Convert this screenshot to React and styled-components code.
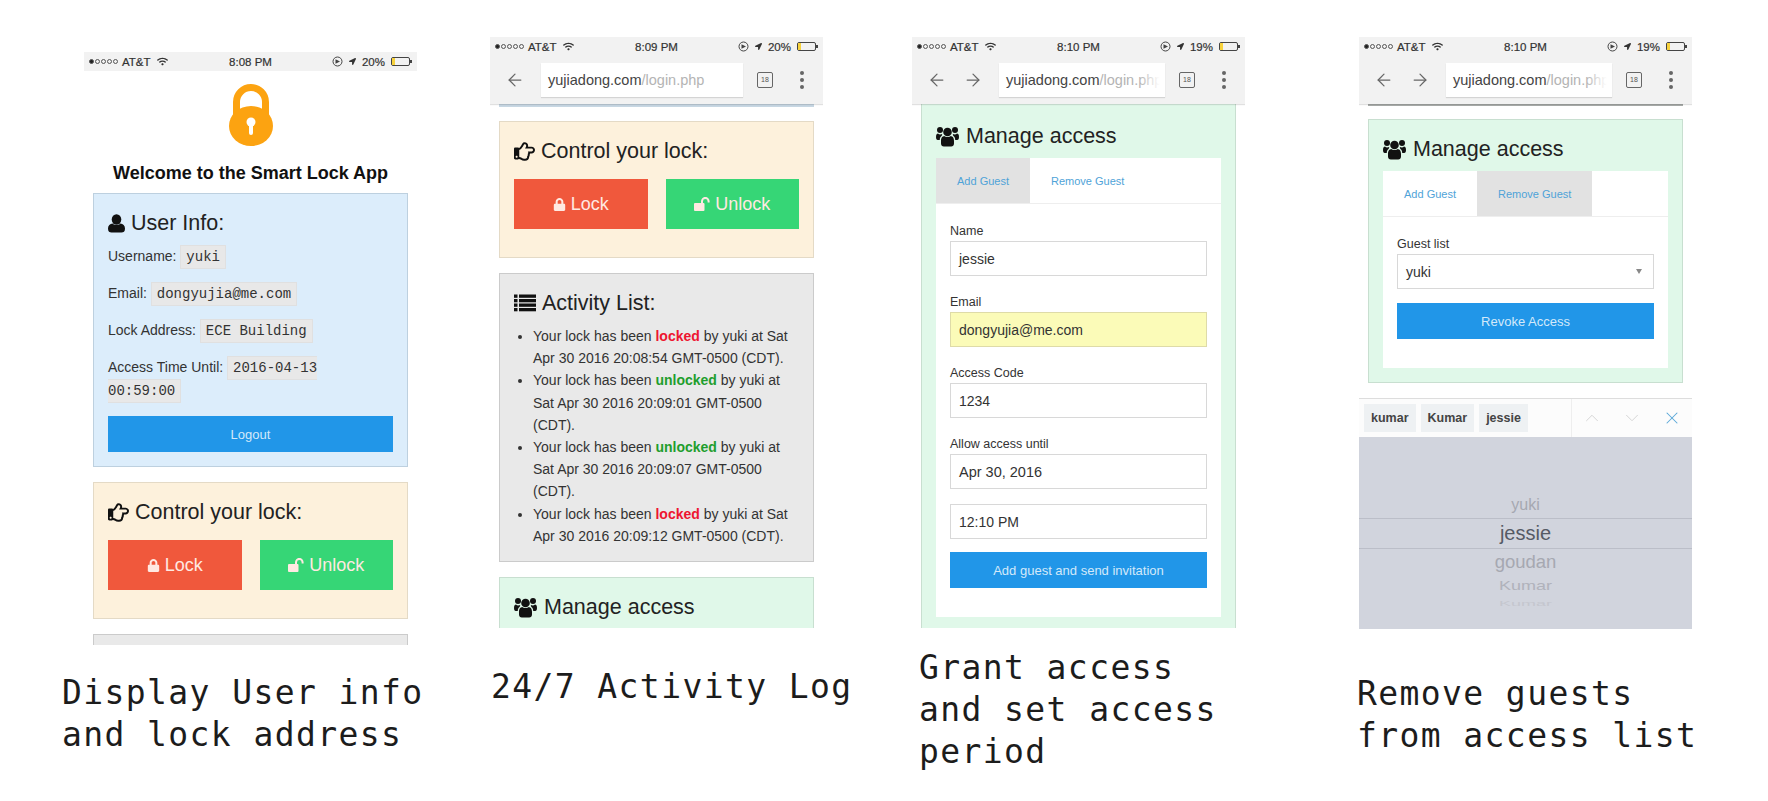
import styled, { createGlobalStyle } from "styled-components";
import { FaRegHandPointRight, FaLock, FaWifi, FaLocationArrow } from "react-icons/fa";
import { ArrowLeft, ArrowRight, ChevronUp, ChevronDown, X } from "lucide-react";

const tones = {
  blue: { bg: "#dcedfb", line: "#bdd0df" },
  yellow: { bg: "#fdf1dc", line: "#e4dac6" },
  gray: { bg: "#e9e9e9", line: "#cbcbcb" },
  green: { bg: "#e0f8e9", line: "#c8dfd0" },
};

const GlobalStyle = createGlobalStyle`
  html, body {
    margin: 0;
    padding: 0;
    background: #fff;
  }

  * {
    box-sizing: border-box;
  }
`;

const Page = styled.div`
  display: flex;
  align-items: flex-start;
  width: 1768px;
  height: 801px;
  overflow: hidden;
  padding-left: 62px;
  font-family: "Liberation Sans", Arial, sans-serif;
  color: #222;
`;

const Column = styled.section`
  flex: none;
  width: ${(p) => p.$width}px;
  margin-left: ${(p) => p.$left || 0}px;
  margin-top: ${(p) => p.$top}px;
`;

const Phone = styled.div`
  width: 333px;
  height: ${(p) => p.$height}px;
  margin-left: ${(p) => p.$inset || 0}px;
  overflow: hidden;
`;

const Caption = styled.p`
  margin: ${(p) => p.$top}px 0 0 ${(p) => p.$inset || 0}px;
  font-family: "DejaVu Sans Mono", monospace;
  font-size: 33px;
  letter-spacing: 1.4px;
  line-height: 42px;
  color: #1c1c1c;
  white-space: nowrap;
`;

/* ---- status bar and browser chrome ---- */

const Chrome = styled.header`
  background: #f2f2f2;
  position: relative;
  z-index: 1;
  box-shadow: 0 1px 1px rgba(0, 0, 0, 0.12);
`;

const StatusBar = styled.div`
  display: grid;
  grid-template-columns: 1fr auto 1fr;
  align-items: center;
  height: 19px;
  padding: 0 5px;
  background: #f2f2f2;
  font-size: 11.5px;
  color: #333;
  -webkit-text-stroke: 0.2px #333;
`;

const StatusLeft = styled.div`
  display: flex;
  align-items: center;
  gap: 6px;
`;

const Carrier = styled.span`
  display: flex;
  align-items: center;
  gap: 4px;
`;

const Dots = styled.span`
  display: flex;
  gap: 1px;
`;

const Dot = styled.i`
  width: 5px;
  height: 5px;
  border-radius: 50%;
  border: 0.5px solid #555;
  background: ${(p) => (p.$on ? "#222" : "transparent")};
`;

const StatusRight = styled.div`
  display: flex;
  align-items: center;
  justify-content: flex-end;
  gap: 6px;
`;

const Battery = styled.span`
  position: relative;
  display: block;
  width: 19px;
  height: 9px;
  margin-right: 2px;
  border: 1px solid #444;
  border-radius: 2px;

  &::before {
    content: "";
    display: block;
    width: ${(p) => p.$level}%;
    height: 100%;
    background: #f7d23c;
  }

  &::after {
    content: "";
    position: absolute;
    right: -3px;
    top: 2px;
    width: 2px;
    height: 3px;
    background: #444;
  }
`;

const NavBar = styled.nav`
  display: flex;
  align-items: center;
  height: 48px;
  padding: 0 6px 0 7px;
`;

const NavSlot = styled.span`
  flex: none;
  display: flex;
  justify-content: center;
  width: 36px;
  color: #666;
`;

const UrlBox = styled.div`
  position: relative;
  flex: 1;
  min-width: 0;
  height: 34px;
  margin-left: 8px;
  padding: 0 7px;
  background: #fff;
  box-shadow: 0 1px 1px rgba(0, 0, 0, 0.12);
  font-size: 14.5px;
  line-height: 34px;
  white-space: nowrap;
  overflow: hidden;
  color: #444;

  ${(p) =>
    p.$fade &&
    `&::after {
      content: "";
      position: absolute;
      top: 0;
      right: 0;
      width: 26px;
      height: 100%;
      background: linear-gradient(to right, rgba(255, 255, 255, 0), #fff 80%);
    }`}
`;

const UrlPath = styled.span`
  color: #b4b4b4;
`;

const TabSlot = styled.span`
  flex: none;
  display: flex;
  justify-content: center;
  width: 44px;
`;

const TabCount = styled.span`
  width: 16px;
  height: 16px;
  border: 1.5px solid #666;
  border-radius: 2px;
  font-size: 7px;
  line-height: 13px;
  text-align: center;
  color: #555;
`;

const MenuDots = styled.span`
  flex: none;
  display: flex;
  flex-direction: column;
  align-items: center;
  gap: 3px;
  width: 30px;
`;

const MenuDot = styled.i`
  width: 4px;
  height: 4px;
  border-radius: 50%;
  background: #666;
`;

const Sliver = styled.div`
  height: ${(p) => p.$height}px;
  margin: 0 9px ${(p) => p.$gap}px;
  background: ${(p) => p.$color};
`;

/* ---- app content ---- */

const Logo = styled.svg`
  display: block;
  width: 44px;
  height: 62px;
  margin: 13px auto 0;
`;

const AppTitle = styled.h1`
  margin: 16px 0 9px;
  font-size: 18px;
  line-height: 22px;
  font-weight: 700;
  text-align: center;
  color: #111;
`;

const Panel = styled.div`
  margin: 0 9px 15px;
  padding: ${(p) => (p.$flush ? 20 : 17)}px 14px 14px;
  background: ${(p) => tones[p.$tone].bg};
  border: 1px solid ${(p) => tones[p.$tone].line};
  border-top-width: ${(p) => (p.$flush ? 0 : 1)}px;
`;

const PanelTitle = styled.h2`
  display: flex;
  align-items: center;
  gap: ${(p) => p.$gap || 6}px;
  margin: 0 0 10px;
  font-size: 21.5px;
  line-height: 24px;
  font-weight: 400;
  color: #222;

  svg {
    flex: none;
    color: #111;
  }
`;

const InfoRow = styled.p`
  margin: 0 0 14px;
  font-size: 14px;
  line-height: 23px;
  color: #333;
`;

const Code = styled.code`
  padding: 3px 5px;
  font-family: "Liberation Mono", monospace;
  font-size: 14px;
  line-height: 1;
  color: #333;
  background: #e8e8e8;
  border: 1px solid #e0e0e0;
`;

const WideButton = styled.button`
  display: block;
  width: 100%;
  height: 36px;
  margin-top: ${(p) => p.$top || 0}px;
  border: 0;
  background: #2196e8;
  color: #d3e9fa;
  font-family: inherit;
  font-size: 13px;
`;

const Actions = styled.div`
  display: grid;
  grid-template-columns: 1fr 1fr;
  gap: 18px;
  margin: 16px 0 14px;
`;

const ActionButton = styled.button`
  display: flex;
  align-items: center;
  justify-content: center;
  gap: 5px;
  height: 50px;
  border: 0;
  background: ${(p) => (p.$unlock ? "#36d676" : "#f0583c")};
  color: #ffe9e2;
  font-family: inherit;
  font-size: 18px;
`;

const ActivityList = styled.ul`
  margin: 0;
  padding-left: 19px;
  font-size: 14px;
  line-height: 22.2px;
  color: #333;
`;

const Status = styled.b`
  color: ${(p) => (p.$locked ? "#ee1530" : "#1f9e2d")};
`;

const Card = styled.div`
  margin-top: ${(p) => p.$top || 0}px;
  background: #fff;
`;

const Tabs = styled.div`
  display: flex;
  height: 46px;
  border-bottom: 1px solid #eee;
`;

const Tab = styled.a`
  display: flex;
  align-items: center;
  padding: 0 21px;
  background: ${(p) => (p.$active ? "#e2e2e2" : "transparent")};
  font-size: 11px;
  color: #4fa3d8;
`;

const TabPane = styled.div`
  padding: 16px 14px 29px;
`;

const Group = styled.div`
  margin-bottom: ${(p) => p.$gap ?? 15}px;
`;

const Label = styled.label`
  display: block;
  padding-top: 2px;
  font-size: 12.5px;
  line-height: 19px;
  color: #333;
`;

const Field = styled.div`
  display: flex;
  align-items: center;
  justify-content: space-between;
  height: 35px;
  padding: 0 8px;
  background: ${(p) => (p.$filled ? "#fbfbb8" : "#fff")};
  border: 1px solid ${(p) => (p.$filled ? "#dedba8" : "#d8d8d8")};
  font-size: ${(p) => p.$size || 14}px;
  color: #333;
`;

const Caret = styled.i`
  width: 0;
  height: 0;
  margin-right: 3px;
  border: 3px solid transparent;
  border-top: 5px solid #888;
  border-bottom: 0;
`;

/* ---- ios keyboard accessory and picker ---- */

const Accessory = styled.div`
  display: flex;
  align-items: center;
  height: 39px;
  padding-left: 5px;
  background: #fcfcfc;
  border-top: 1px solid #ddd;
`;

const Chip = styled.span`
  display: flex;
  align-items: center;
  height: 28px;
  margin-right: 5px;
  padding: 0 7px;
  background: #eef1f3;
  font-size: 12.5px;
  font-weight: 700;
  color: #444;
`;

const Divider = styled.i`
  width: 1px;
  height: 100%;
  margin-left: 38px;
  background: #eee;
`;

const AccessoryIcon = styled.span`
  display: flex;
  justify-content: center;
  width: 40px;
  color: ${(p) => (p.$accent ? "#5aa8d8" : "#d2d2d2")};
`;

const Picker = styled.div`
  display: flex;
  flex-direction: column;
  height: 192px;
  padding-top: 55px;
  background: #d1d4dd;
`;

const PickerItem = styled.div`
  display: flex;
  align-items: center;
  justify-content: center;
  height: ${(p) => p.$height}px;
  font-size: ${(p) => p.$size}px;
  color: ${(p) => p.$color};
  ${(p) => p.$selected && "border-top: 1px solid #bbbec8; border-bottom: 1px solid #bbbec8;"}
`;

const Squashed = styled.span`
  display: block;
  transform: scaleY(${(p) => p.$scale});
`;

function AlarmIcon() {
  return (
    <svg width="11" height="11" viewBox="0 0 11 11">
      <circle cx="5.5" cy="5.5" r="4.5" fill="none" stroke="#444" strokeWidth="1" />
      <path d="M3.5 3.2 L8 5.5 L3.5 7.8 Z" fill="#444" />
    </svg>
  );
}

function UserIcon() {
  return (
    <svg width="17" height="19" viewBox="0 0 17 19" fill="currentColor">
      <ellipse cx="8.5" cy="5.5" rx="4.8" ry="5.2" />
      <path d="M0 14.5C0 11.5 2 10 4.6 9.6 6.5 11.6 10.5 11.6 12.4 9.6 15 10 17 11.5 17 14.5 17 17.5 15.5 18.5 13.5 18.5H3.5C1.5 18.5 0 17.5 0 14.5Z" />
    </svg>
  );
}

function ListIcon() {
  return (
    <svg width="22" height="18" viewBox="0 0 22 18" fill="currentColor">
      {[0.5, 5, 9.5, 14].map((y) => (
        <g key={y}>
          <rect x="0" y={y} width="3.5" height="3.3" />
          <rect x="5" y={y} width="17" height="3.3" />
        </g>
      ))}
    </svg>
  );
}

function UsersIcon() {
  return (
    <svg width="23" height="21" viewBox="0 0 23 21" fill="currentColor">
      <circle cx="11.5" cy="6" r="4.3" />
      <circle cx="4" cy="4" r="3" />
      <circle cx="19" cy="4" r="3" />
      <path d="M5 15C5 11.5 6.5 10.3 8.3 10 9.8 11.4 13.2 11.4 14.7 10 16.5 10.3 18 11.5 18 15V17.5C18 19.6 16.8 20.5 15.2 20.5H7.8C6.2 20.5 5 19.6 5 17.5Z" />
      <path d="M0 11C0 8.5 1 7.6 2 7.6 3 8.6 4.6 8.8 6.2 8 5.9 9.6 6 9.6 5 10.4 4 11.4 3.8 12.6 3.8 14H1.8C.6 14 0 13 0 11Z" />
      <path d="M23 11C23 8.5 22 7.6 21 7.6 20 8.6 18.4 8.8 16.8 8 17.1 9.6 17 9.6 18 10.4 19 11.4 19.2 12.6 19.2 14H21.2C22.4 14 23 13 23 11Z" />
    </svg>
  );
}

function OpenLockIcon() {
  return (
    <svg width="16" height="14" viewBox="0 0 16 14" fill="currentColor">
      <rect x="0" y="6" width="10.5" height="8" rx="1" />
      <path d="M8 6.5V4.2a3.2 3.2 0 0 1 6.6 0V5.5" fill="none" stroke="currentColor" strokeWidth="2" />
    </svg>
  );
}

function PhoneStatus({ time, percent, level }) {
  return (
    <StatusBar>
      <StatusLeft>
        <Carrier>
          <Dots>
            <Dot $on />
            <Dot />
            <Dot />
            <Dot />
            <Dot />
          </Dots>
          AT&amp;T
        </Carrier>
        <FaWifi size={11} />
      </StatusLeft>
      <span>{time}</span>
      <StatusRight>
        <AlarmIcon />
        <FaLocationArrow size={7} />
        <span>{percent}</span>
        <Battery $level={level} />
      </StatusRight>
    </StatusBar>
  );
}

function Browser({ time, percent, level, forward }) {
  return (
    <Chrome>
      <PhoneStatus time={time} percent={percent} level={level} />
      <NavBar>
        <NavSlot>
          <ArrowLeft size={20} strokeWidth={1.5} />
        </NavSlot>
        {forward && (
          <NavSlot>
            <ArrowRight size={20} strokeWidth={1.5} />
          </NavSlot>
        )}
        <UrlBox $fade={forward}>
          yujiadong.com<UrlPath>/login.php</UrlPath>
        </UrlBox>
        <TabSlot>
          <TabCount>18</TabCount>
        </TabSlot>
        <MenuDots>
          <MenuDot />
          <MenuDot />
          <MenuDot />
        </MenuDots>
      </NavBar>
    </Chrome>
  );
}

function ControlPanel() {
  return (
    <Panel $tone="yellow">
      <PanelTitle>
        <FaRegHandPointRight size={21} />
        Control your lock:
      </PanelTitle>
      <Actions>
        <ActionButton>
          <FaLock size={13} />
          Lock
        </ActionButton>
        <ActionButton $unlock>
          <OpenLockIcon />
          Unlock
        </ActionButton>
      </Actions>
    </Panel>
  );
}

function ManageTitle() {
  return (
    <PanelTitle $gap={7}>
      <UsersIcon />
      Manage access
    </PanelTitle>
  );
}

const activity = [
  { word: "locked", locked: true, rest: "by yuki at Sat Apr 30 2016 20:08:54 GMT-0500 (CDT)." },
  { word: "unlocked", locked: false, rest: "by yuki at Sat Apr 30 2016 20:09:01 GMT-0500 (CDT)." },
  { word: "unlocked", locked: false, rest: "by yuki at Sat Apr 30 2016 20:09:07 GMT-0500 (CDT)." },
  { word: "locked", locked: true, rest: "by yuki at Sat Apr 30 2016 20:09:12 GMT-0500 (CDT)." },
];

export default function App() {
  return (
    <>
      <GlobalStyle />
      <Page>
        <Column $width={355} $top={52}>
          <Phone $height={593} $inset={22}>
            <PhoneStatus time="8:08 PM" percent="20%" level={18} />
            <Logo viewBox="0 0 44 62">
              <path d="M7.5 34V18a14.5 14.5 0 0 1 29 0V34" fill="none" stroke="#fca311" strokeWidth="7" />
              <ellipse cx="22" cy="42" rx="22" ry="20" fill="#fca311" />
              <circle cx="22" cy="38" r="4.5" fill="#fff" />
              <rect x="20" y="38" width="4" height="13" rx="2" fill="#fff" />
            </Logo>
            <AppTitle>Welcome to the Smart Lock App</AppTitle>
            <Panel $tone="blue">
              <PanelTitle>
                <UserIcon />
                User Info:
              </PanelTitle>
              <InfoRow>
                Username: <Code>yuki</Code>
              </InfoRow>
              <InfoRow>
                Email: <Code>dongyujia@me.com</Code>
              </InfoRow>
              <InfoRow>
                Lock Address: <Code>ECE Building</Code>
              </InfoRow>
              <InfoRow>
                Access Time Until: <Code>2016-04-13 00:59:00</Code>
              </InfoRow>
              <WideButton $top={2}>Logout</WideButton>
            </Panel>
            <ControlPanel />
            <Panel $tone="gray" />
          </Phone>
          <Caption $top={27}>
            Display User info
            <br />
            and lock address
          </Caption>
        </Column>

        <Column $width={333} $left={73} $top={37}>
          <Phone $height={591}>
            <Browser time="8:09 PM" percent="20%" level={18} />
            <Sliver $height={3} $gap={14} $color="#c7d7e3" />
            <ControlPanel />
            <Panel $tone="gray">
              <PanelTitle>
                <ListIcon />
                Activity List:
              </PanelTitle>
              <ActivityList>
                {activity.map((item, i) => (
                  <li key={i}>
                    Your lock has been <Status $locked={item.locked}>{item.word}</Status> {item.rest}
                  </li>
                ))}
              </ActivityList>
            </Panel>
            <Panel $tone="green">
              <ManageTitle />
            </Panel>
          </Phone>
          <Caption $top={38} $inset={1}>
            24/7 Activity Log
          </Caption>
        </Column>

        <Column $width={333} $left={89} $top={37}>
          <Phone $height={591}>
            <Browser time="8:10 PM" percent="19%" level={16} forward />
            <Panel $tone="green" $flush>
              <ManageTitle />
              <Card $top={1}>
                <Tabs>
                  <Tab $active>Add Guest</Tab>
                  <Tab>Remove Guest</Tab>
                </Tabs>
                <TabPane>
                  <Group>
                    <Label>Name</Label>
                    <Field>jessie</Field>
                  </Group>
                  <Group>
                    <Label>Email</Label>
                    <Field $filled>dongyujia@me.com</Field>
                  </Group>
                  <Group>
                    <Label>Access Code</Label>
                    <Field>1234</Field>
                  </Group>
                  <Group>
                    <Label>Allow access until</Label>
                    <Field $size={14.5}>Apr 30, 2016</Field>
                  </Group>
                  <Group $gap={13}>
                    <Field>12:10 PM</Field>
                  </Group>
                  <WideButton>Add guest and send invitation</WideButton>
                </TabPane>
              </Card>
            </Panel>
          </Phone>
          <Caption $top={19} $inset={7}>
            Grant access
            <br />
            and set access
            <br />
            period
          </Caption>
        </Column>

        <Column $width={334} $left={112} $top={37}>
          <Phone $height={592} $inset={2}>
            <Browser time="8:10 PM" percent="19%" level={16} forward />
            <Sliver $height={2} $gap={13} $color="#a9acaa" />
            <Panel $tone="green">
              <ManageTitle />
              <Card>
                <Tabs>
                  <Tab>Add Guest</Tab>
                  <Tab $active>Remove Guest</Tab>
                </Tabs>
                <TabPane>
                  <Group $gap={14}>
                    <Label>Guest list</Label>
                    <Field>
                      yuki
                      <Caret />
                    </Field>
                  </Group>
                  <WideButton>Revoke Access</WideButton>
                </TabPane>
              </Card>
            </Panel>
            <Accessory>
              <Chip>kumar</Chip>
              <Chip>Kumar</Chip>
              <Chip>jessie</Chip>
              <Divider />
              <AccessoryIcon>
                <ChevronUp size={22} strokeWidth={1} />
              </AccessoryIcon>
              <AccessoryIcon>
                <ChevronDown size={22} strokeWidth={1} />
              </AccessoryIcon>
              <AccessoryIcon $accent>
                <X size={20} strokeWidth={1.25} />
              </AccessoryIcon>
            </Accessory>
            <Picker>
              <PickerItem $height={26} $size={16} $color="#a6a8b1">yuki</PickerItem>
              <PickerItem $height={31} $size={20} $color="#555a65" $selected>jessie</PickerItem>
              <PickerItem $height={26} $size={18.5} $color="#a6a8b1">goudan</PickerItem>
              <PickerItem $height={20} $size={18} $color="#b0b2bb">
                <Squashed $scale={0.75}>Kumar</Squashed>
              </PickerItem>
              <PickerItem $height={16} $size={18} $color="#c4c6ce">
                <Squashed $scale={0.4}>Kumar</Squashed>
              </PickerItem>
            </Picker>
          </Phone>
          <Caption $top={44}>
            Remove guests
            <br />
            from access list
          </Caption>
        </Column>
      </Page>
    </>
  );
}
